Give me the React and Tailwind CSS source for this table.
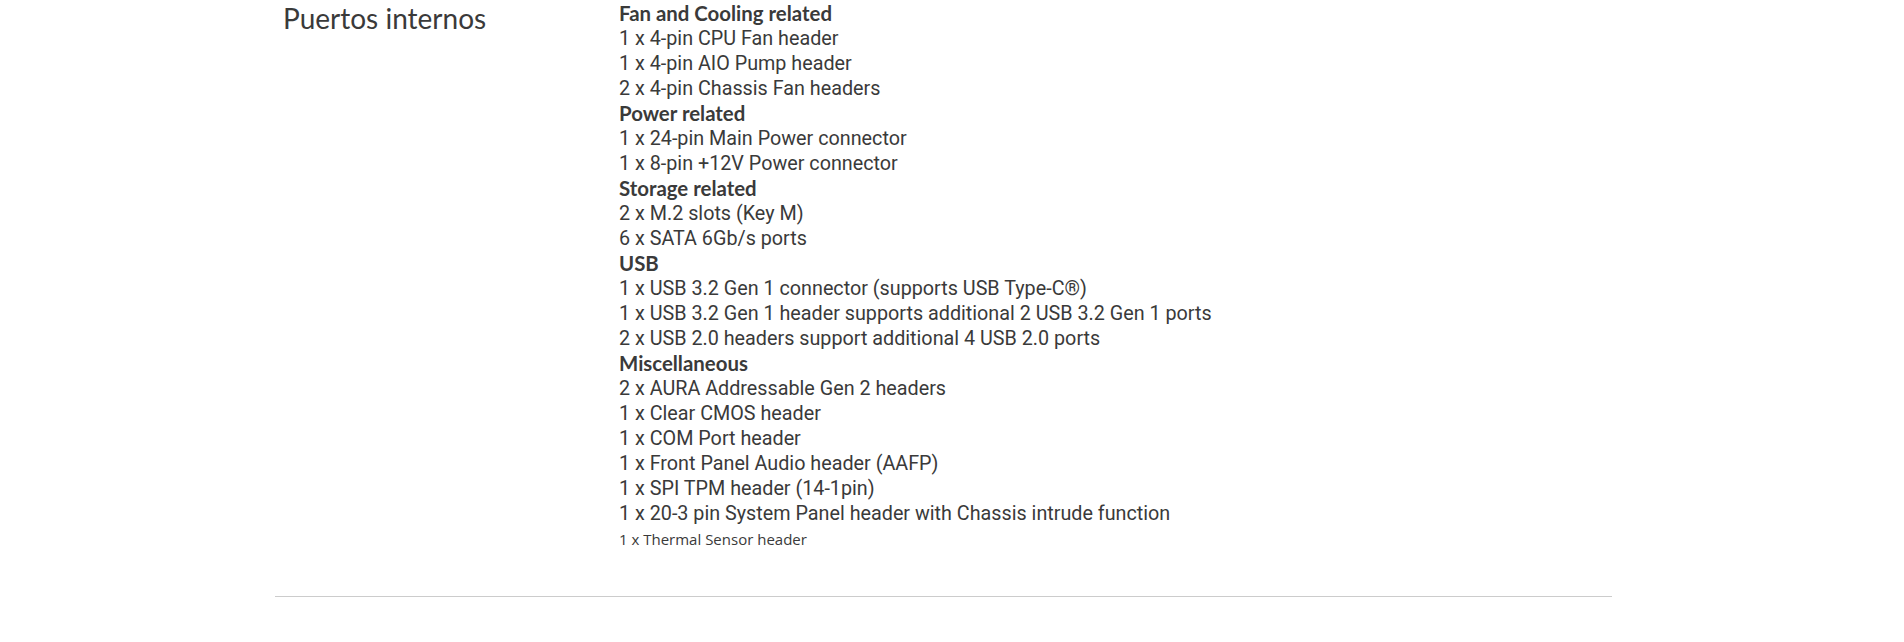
import React from "react";

const groups = [
  {
    title: "Fan and Cooling related",
    items: [
      "1 x 4-pin CPU Fan header",
      "1 x 4-pin AIO Pump header",
      "2 x 4-pin Chassis Fan headers",
    ],
  },
  {
    title: "Power related",
    items: ["1 x 24-pin Main Power connector", "1 x 8-pin +12V Power connector"],
  },
  {
    title: "Storage related",
    items: ["2 x M.2 slots (Key M)", "6 x SATA 6Gb/s ports"],
  },
  {
    title: "USB",
    items: [
      "1 x USB 3.2 Gen 1 connector (supports USB Type-C®)",
      "1 x USB 3.2 Gen 1 header supports additional 2 USB 3.2 Gen 1 ports",
      "2 x USB 2.0 headers support additional 4 USB 2.0 ports",
    ],
  },
  {
    title: "Miscellaneous",
    items: [
      "2 x AURA Addressable Gen 2 headers",
      "1 x Clear CMOS header",
      "1 x COM Port header",
      "1 x Front Panel Audio header (AAFP)",
      "1 x SPI TPM header (14-1pin)",
      "1 x 20-3 pin System Panel header with Chassis intrude function",
    ],
  },
];

export default function App() {
  return (
    <div className="w-[1904px] h-[642px] bg-white overflow-hidden">
      <div className="ml-[275px] w-[1337px] border-b border-[#cccccc] flex pt-[1px] pb-[44px]">
        <div className="w-[344px] pl-[8px] shrink-0">
          <h2 className="text-[28px] leading-[34px] text-[#3a3a3a] font-['Lato','Open_Sans',sans-serif]">
            Puertos internos
          </h2>
        </div>
        <div className="text-[19.75px] leading-[25px] text-[#3a3a3a] font-['Roboto','Liberation_Sans',sans-serif]">
          {groups.map((g) => (
            <div key={g.title}>
              <div className="font-bold text-[20.4px] font-['Lato','Open_Sans',sans-serif]">
                {g.title}
              </div>
              {g.items.map((it) => (
                <div key={it}>{it}</div>
              ))}
            </div>
          ))}
          <div className="text-[15px] leading-[26px] font-['Open_Sans',sans-serif]">
            1 x Thermal Sensor header
          </div>
        </div>
      </div>
    </div>
  );
}
